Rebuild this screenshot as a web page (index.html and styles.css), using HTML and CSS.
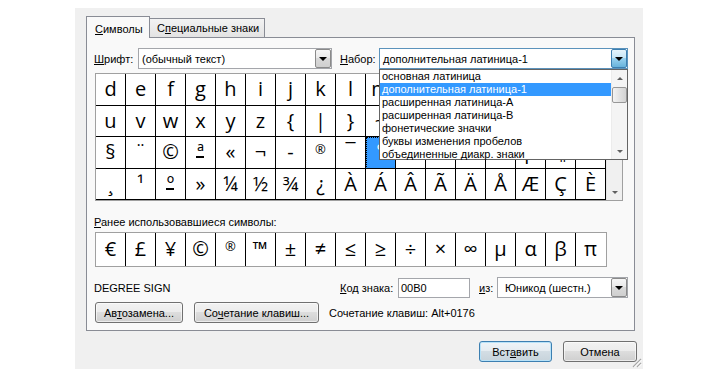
FILE: index.html
```html
<!DOCTYPE html>
<html>
<head>
<meta charset="utf-8">
<link rel="stylesheet" href="styles.css">
</head>
<body>
<div class="dialog">
  <div class="tabs">
    <div class="tab active"><u>С</u>имволы</div>
    <div class="tab">С<u>п</u>ециальные знаки</div>
  </div>
  <div class="panel">
    <div class="font-row">
      <span class="lbl font-lbl"><u>Ш</u>рифт:</span>
      <div class="combo font-combo"><span class="val">(обычный текст)</span><span class="dd"><i class="tri"></i></span></div>
      <span class="lbl set-lbl"><u>Н</u>абор:</span>
      <div class="combo set-combo"><span class="val">дополнительная латиница-1</span><span class="dd hot"><i class="tri"></i></span></div>
    </div>

    <div class="charmap">
      <div class="cells">
        <div class="c">d</div><div class="c">e</div><div class="c">f</div><div class="c">g</div><div class="c">h</div><div class="c">i</div><div class="c">j</div><div class="c">k</div><div class="c">l</div><div class="c">m</div><div class="c">n</div><div class="c">o</div><div class="c">p</div><div class="c">q</div><div class="c">r</div><div class="c">s</div><div class="c">t</div>
        <div class="c">u</div><div class="c">v</div><div class="c">w</div><div class="c">x</div><div class="c">y</div><div class="c">z</div><div class="c">{</div><div class="c">|</div><div class="c">}</div><div class="c">~</div><div class="c">&nbsp;</div><div class="c">¡</div><div class="c">¢</div><div class="c">£</div><div class="c">¤</div><div class="c">¥</div><div class="c">¦</div>
        <div class="c">§</div><div class="c">¨</div><div class="c">©</div><div class="c ord">ª</div><div class="c">«</div><div class="c">¬</div><div class="c">-</div><div class="c"><span class="reg">®</span></div><div class="c">¯</div><div class="c sel">°</div><div class="c">±</div><div class="c">²</div><div class="c">³</div><div class="c">´</div><div class="c">µ</div><div class="c">¶</div><div class="c">·</div>
        <div class="c">¸</div><div class="c">¹</div><div class="c ord">º</div><div class="c">»</div><div class="c">¼</div><div class="c">½</div><div class="c">¾</div><div class="c">¿</div><div class="c">À</div><div class="c">Á</div><div class="c">Â</div><div class="c">Ã</div><div class="c">Ä</div><div class="c">Å</div><div class="c">Æ</div><div class="c">Ç</div><div class="c">È</div>
      </div>
      <div class="vscroll">
        <span class="sarr"><i class="tri up"></i></span>
        <span class="strack"></span>
        <span class="sarr"><i class="tri"></i></span>
      </div>
    </div>

    <div class="recent-lbl"><u>Р</u>анее использовавшиеся символы:</div>
    <div class="recent">
      <div class="r">€</div><div class="r">£</div><div class="r">¥</div><div class="r">©</div><div class="r"><span class="reg">®</span></div><div class="r">™</div><div class="r">±</div><div class="r">≠</div><div class="r">≤</div><div class="r">≥</div><div class="r">÷</div><div class="r">×</div><div class="r">∞</div><div class="r">µ</div><div class="r">α</div><div class="r">β</div><div class="r">π</div>
    </div>

    <div class="info-row">
      <span class="name">DEGREE SIGN</span>
      <span class="lbl code-lbl"><u>К</u>од знака:</span>
      <div class="field">00B0</div>
      <span class="lbl from-lbl"><u>и</u>з:</span>
      <div class="combo enc-combo"><span class="val">Юникод (шестн.)</span><span class="dd"><i class="tri"></i></span></div>
    </div>

    <div class="btn-row">
      <button class="btn auto-btn">Ав<u>т</u>озамена...</button>
      <button class="btn key-btn">Со<u>ч</u>етание клавиш...</button>
      <span class="shortcut">Сочетание клавиш: Alt+0176</span>
    </div>

    <div class="dropdown">
      <div class="items">
        <div class="it">основная латиница</div>
        <div class="it hl">дополнительная латиница-1</div>
        <div class="it">расширенная латиница-A</div>
        <div class="it">расширенная латиница-B</div>
        <div class="it">фонетические значки</div>
        <div class="it">буквы изменения пробелов</div>
        <div class="it">объединенные диакр. знаки</div>
      </div>
      <div class="lscroll">
        <span class="sarr"><i class="tri up"></i></span>
        <span class="ltrack"><span class="thumb"></span></span>
        <span class="sarr"><i class="tri"></i></span>
      </div>
    </div>
  </div>

  <div class="footer">
    <button class="btn default ok-btn">Вст<u>а</u>вить</button>
    <button class="btn cancel-btn">Отмена</button>
  </div>
  <svg class="grip" width="11" height="11" viewBox="0 0 11 11">
    <path d="M10 2 L2 10 M10 6 L6 10" stroke="#a8a8a8" stroke-width="1.2" fill="none"/>
    <path d="M10.5 3 L3 10.5 M10.5 7 L7 10.5" stroke="#ffffff" stroke-width="1" fill="none"/>
  </svg>
</div>
</body>
</html>
```

FILE: styles.css
```css
* { box-sizing: border-box; }
html, body { margin: 0; padding: 0; background: #ffffff; }
body {
  font-family: "Liberation Sans", Arial, sans-serif;
  font-size: 11px;
  color: #000;
}
u { text-decoration: underline; text-underline-offset: 1px; }

.dialog {
  position: relative;
  margin: 8px 0 0 75px;
  width: 568px;
  height: 361px;
  background: #f0f0f0;
  padding: 8px 8px 0 11px;
}

.tabs {
  display: flex;
  height: 21px;
  align-items: flex-end;
}
.tab {
  height: 19px;
  padding: 0 0 0 7px;
  line-height: 18px;
  border: 1px solid #898c95;
  border-bottom: none;
  background: linear-gradient(#f3f3f3, #e3e3e3);
  width: 116px;
  margin-left: -1px;
}
.tab.active {
  position: relative;
  z-index: 2;
  height: 22px;
  width: 64px;
  margin-left: 0;
  margin-bottom: -1px;
  padding-left: 8px;
  line-height: 24px;
  background: #f9f9f9;
}

.panel {
  position: relative;
  border: 1px solid #898c95;
  background: #f9f9f9;
  width: 549px;
  height: 294px;
  padding-top: 10px;
}

.font-row {
  display: flex;
  align-items: center;
  height: 21px;
  padding-left: 7px;
}
.lbl { white-space: nowrap; }
.font-lbl { width: 44px; }
.set-lbl { width: 39px; margin-left: 8px; }

.combo {
  position: relative;
  height: 21px;
  border: 1px solid #a4a6ab;
  background: #ffffff;
  display: flex;
  align-items: center;
  padding-left: 3px;
}
.font-combo { width: 194px; }
.set-combo { width: 249px; border-color: #5c93bc; }
.combo .val { flex: 1; white-space: nowrap; }
.dd {
  width: 16px;
  height: 19px;
  border: 1px solid #8a8a8a;
  border-radius: 2px;
  background: linear-gradient(#f6f6f6, #e8e8e8 50%, #d9d9d9 50%, #cfcfcf);
  display: flex;
  align-items: center;
  justify-content: center;
}
.dd.hot {
  border-color: #3c7fb1;
  background: linear-gradient(#e5f4fc, #c4e5f6 50%, #98d1ef 50%, #68b3db);
}
.tri {
  display: block;
  width: 0;
  height: 0;
  border-left: 4px solid transparent;
  border-right: 4px solid transparent;
  border-top: 4px solid #000;
}
.tri.up {
  border-top: none;
  border-bottom: 4px solid #000;
}

.charmap {
  display: flex;
  margin: 4px 0 0 8px;
  width: 528px;
  height: 128px;
  border: 1px solid #a0a0a0;
  background: #ffffff;
}
.cells {
  display: grid;
  grid-template-columns: repeat(17, 30px);
  grid-template-rows: 32px 31px 32px 31px;
}
.c {
  position: relative;
  border-right: 1px solid #000;
  border-bottom: 1px solid #000;
  font-family: "Open Sans", "DejaVu Sans", sans-serif;
  font-size: 20px;
  line-height: 30px;
  text-align: center;
  background: #fff;
}
.c.ord::after {
  content: "";
  position: absolute;
  left: 10px;
  top: 19px;
  width: 8px;
  height: 2px;
  background: #000;
}
.reg {
  display: inline-block;
  font-size: 13px;
  line-height: 13px;
  vertical-align: 5px;
}
.c.sel {
  background: #3399ff;
  color: #fff;
  outline: 1px dotted #000;
  outline-offset: -1px;
}
.vscroll {
  width: 16px;
  display: flex;
  flex-direction: column;
  background: #f0f0f0;
  border-left: 1px solid #e6e6e6;
}
.sarr {
  height: 16px;
  display: flex;
  align-items: center;
  justify-content: center;
}
.sarr .tri {
  border-left-width: 3px;
  border-right-width: 3px;
  border-top-width: 3px;
  border-top-color: #606060;
}
.sarr .tri.up {
  border-bottom: 3px solid #606060;
  border-top: none;
}
.strack { flex: 1; }

.recent-lbl {
  margin: 15px 0 0 7px;
  line-height: 13px;
  height: 13px;
}
.recent {
  display: flex;
  margin: 3px 0 0 8px;
  width: 512px;
  height: 35px;
  border: 1px solid #a0a0a0;
  background: #ffffff;
}
.r {
  width: 30px;
  flex: none;
  border-right: 1px solid #000;
  font-family: "Open Sans", "DejaVu Sans", sans-serif;
  font-size: 20px;
  line-height: 32px;
  text-align: center;
}
.r:last-child { border-right: none; width: 29px; }

.info-row {
  display: flex;
  align-items: center;
  margin-top: 10px;
  height: 21px;
  padding-left: 7px;
}
.name { width: 246px; }
.code-lbl { width: 58px; }
.field {
  width: 72px;
  height: 20px;
  border: 1px solid #a4a6ab;
  background: #fff;
  padding-left: 2px;
  line-height: 18px;
}
.from-lbl { width: 18px; margin-left: 9px; }
.enc-combo { width: 131px; padding-left: 7px; }

.btn-row {
  display: flex;
  align-items: center;
  margin-top: 4px;
  height: 21px;
  padding-left: 8px;
}
.btn {
  font-family: "Liberation Sans", Arial, sans-serif;
  font-size: 11px;
  color: #000;
  height: 21px;
  padding: 0;
  border: 1px solid #707070;
  border-radius: 3px;
  background: linear-gradient(#f2f2f2, #ebebeb 50%, #dddddd 50%, #cfcfcf);
  box-shadow: inset 0 0 0 1px rgba(255,255,255,0.6);
}
.auto-btn { width: 88px; }
.key-btn { width: 125px; margin-left: 11px; }
.shortcut { margin-left: 10px; white-space: nowrap; }

.dropdown {
  position: absolute;
  left: 292px;
  top: 31px;
  width: 249px;
  height: 91px;
  background: #fff;
  border: 1px solid #646464;
  display: flex;
  z-index: 5;
}
.items { flex: 1; }
.it {
  height: 13px;
  line-height: 13px;
  padding-left: 2px;
  white-space: nowrap;
}
.it.hl { background: #3399ff; color: #fff; }
.lscroll {
  width: 16px;
  display: flex;
  flex-direction: column;
  background: #f4f4f4;
  border-left: 1px solid #ececec;
}
.ltrack { flex: 1; padding: 1px 0 0 0; }
.thumb {
  display: block;
  width: 15px;
  height: 16px;
  border: 1px solid #979797;
  border-radius: 2px;
  background: linear-gradient(90deg, #f3f3f3, #e2e2e2 50%, #d3d3d3);
}

.footer {
  display: flex;
  justify-content: flex-end;
  gap: 11px;
  margin-top: 10px;
  padding-right: 0;
  width: 551px;
}
.ok-btn { width: 73px; }
.cancel-btn { width: 74px; }
.btn.default {
  border-color: #3c7fb1;
  background: linear-gradient(#eef4f8, #e4ebf0 50%, #d3dde4 50%, #c7d3db);
  box-shadow: inset 0 0 0 1px #b8e2f8;
}
.grip {
  position: absolute;
  right: 1px;
  bottom: 1px;
}
```
